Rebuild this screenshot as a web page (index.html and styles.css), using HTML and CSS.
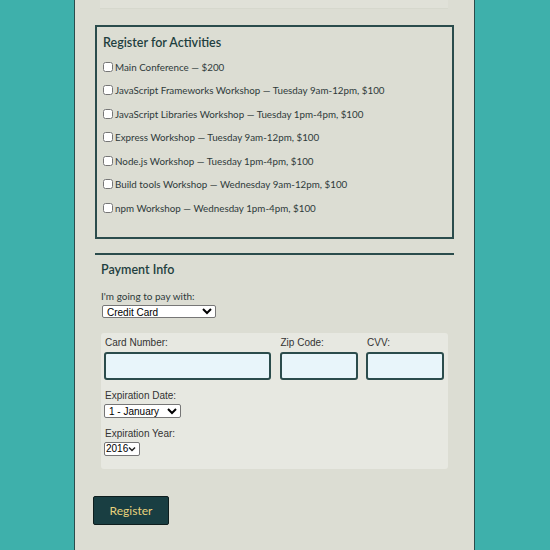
FILE: index.html
```html
<!DOCTYPE html>
<html>
<head>
<meta charset="utf-8">
<link rel="stylesheet" href="styles.css">
</head>
<body>
<div class="page">
  <div class="prev-box"></div>
  <div class="activities">
    <h3 class="section-title act-title">Register for Activities</h3>
    <label class="act"><input type="checkbox"><span>Main Conference — $200</span></label>
    <label class="act"><input type="checkbox"><span>JavaScript Frameworks Workshop — Tuesday 9am-12pm, $100</span></label>
    <label class="act"><input type="checkbox"><span>JavaScript Libraries Workshop — Tuesday 1pm-4pm, $100</span></label>
    <label class="act"><input type="checkbox"><span>Express Workshop — Tuesday 9am-12pm, $100</span></label>
    <label class="act"><input type="checkbox"><span>Node.js Workshop — Tuesday 1pm-4pm, $100</span></label>
    <label class="act"><input type="checkbox"><span>Build tools Workshop — Wednesday 9am-12pm, $100</span></label>
    <label class="act"><input type="checkbox"><span>npm Workshop — Wednesday 1pm-4pm, $100</span></label>
  </div>
  <div class="payment">
    <h3 class="section-title pay-title">Payment Info</h3>
    <div class="pay-label">I'm going to pay with:</div>
    <select class="pay-select">
      <option>Credit Card</option>
      <option>PayPal</option>
      <option>Bitcoin</option>
    </select>
    <div class="card-box">
      <div class="card-grid">
        <div class="field">
          <label class="small-label">Card Number:</label>
          <input class="text-input" type="text">
        </div>
        <div class="field">
          <label class="small-label">Zip Code:</label>
          <input class="text-input" type="text">
        </div>
        <div class="field">
          <label class="small-label">CVV:</label>
          <input class="text-input" type="text">
        </div>
      </div>
      <label class="small-label exp-label">Expiration Date:</label>
      <select class="month-select">
        <option>1 - January</option>
      </select>
      <label class="small-label exp-label">Expiration Year:</label>
      <select class="year-select">
        <option>2016</option>
      </select>
    </div>
  </div>
  <button class="register" type="button">Register</button>
</div>
</body>
</html>
```

FILE: styles.css
```css
html, body {
  margin: 0;
  padding: 0;
}
body {
  background: #3eb0ab;
  font-family: "Lato", "Noto Sans", sans-serif;
  color: #333;
}
.page {
  width: 359px;
  margin-left: 74px;
  padding: 0 20px 40px;
  background: #dcddd3;
  border-left: 1px solid #2b4c4c;
  border-right: 1px solid #2b4c4c;
  min-height: 560px;
}
.prev-box {
  height: 8px;
  margin: 0 6px 0 5px;
  background: #e0e1d8;
  border-bottom: 1px solid #d6d8cd;
}
.activities {
  margin-top: 16px;
  border: 2px solid #2b4c4c;
  padding: 7px 6px 17px;
}
.section-title {
  margin: 0 0 4px;
  font-size: 12.5px;
  line-height: 18px;
  font-weight: 600;
  color: #1f3f3f;
}
.act-title {
  margin-bottom: 3px;
}
.act {
  display: flex;
  align-items: center;
  height: 23.5px;
  font-size: 9.8px;
  color: #2e3a3a;
}
.act input {
  width: 10px;
  height: 10px;
  margin: 0 2px 0 0;
}
.payment {
  margin-top: 14px;
  border-top: 2px solid #2b4c4c;
  padding: 6px 6px 0;
}
.pay-title {
  margin: 0 0 10px;
}
.pay-label {
  font-size: 10px;
  line-height: 14px;
  color: #2e3a3a;
}
.pay-select {
  display: block;
  margin: 2px 0 0 1px;
  width: 114px;
  height: 13px;
  font-family: "Liberation Sans", Arial, sans-serif;
  font-size: 10px;
  padding: 0;
  border: 1px solid #767676;
  border-radius: 2px;
  background: #fff;
}
.card-box {
  margin-top: 15px;
  background: #e7e8e1;
  border-radius: 3px;
  padding: 4px 3px 13px;
}
.card-grid {
  display: grid;
  grid-template-columns: 167px 78px 78px;
  column-gap: 8.5px;
}
.field {
  display: flex;
  flex-direction: column;
}
.small-label {
  display: block;
  font-family: "Liberation Sans", Arial, sans-serif;
  font-size: 10px;
  line-height: 12px;
  color: #333;
  padding-left: 1px;
  margin-bottom: 3px;
}
.text-input {
  box-sizing: border-box;
  height: 28px;
  width: 100%;
  margin: 0;
  border: 2px solid #2b4c4c;
  border-radius: 3px;
  background: #e8f5fa;
}
.exp-label {
  margin-top: 10px;
  margin-bottom: 2px;
}
.month-select, .year-select {
  display: block;
  height: 14px;
  padding: 0;
  margin: 0;
  font-family: "Liberation Sans", Arial, sans-serif;
  font-size: 10px;
  border: 1px solid #767676;
  border-radius: 2px;
  background: #fff;
}
.month-select { width: 77px; }
.year-select {
  width: 36px;
  -webkit-appearance: none;
  appearance: none;
  padding-left: 1px;
  background: #fff url("data:image/svg+xml;utf8,<svg xmlns='http://www.w3.org/2000/svg' width='8' height='6' viewBox='0 0 8 6'><path d='M1 1.5 L4 4.5 L7 1.5' fill='none' stroke='%23222' stroke-width='1.5'/></svg>") no-repeat right 3px center;
}
.register {
  display: block;
  margin: 27px 0 0 -2px;
  width: 76px;
  height: 29px;
  background: #193e42;
  color: #e9d27c;
  font-family: "Lato", "Noto Sans", sans-serif;
  font-size: 12px;
  border: 1px solid #0e1d1d;
  border-radius: 2px;
  padding: 0;
}
```
